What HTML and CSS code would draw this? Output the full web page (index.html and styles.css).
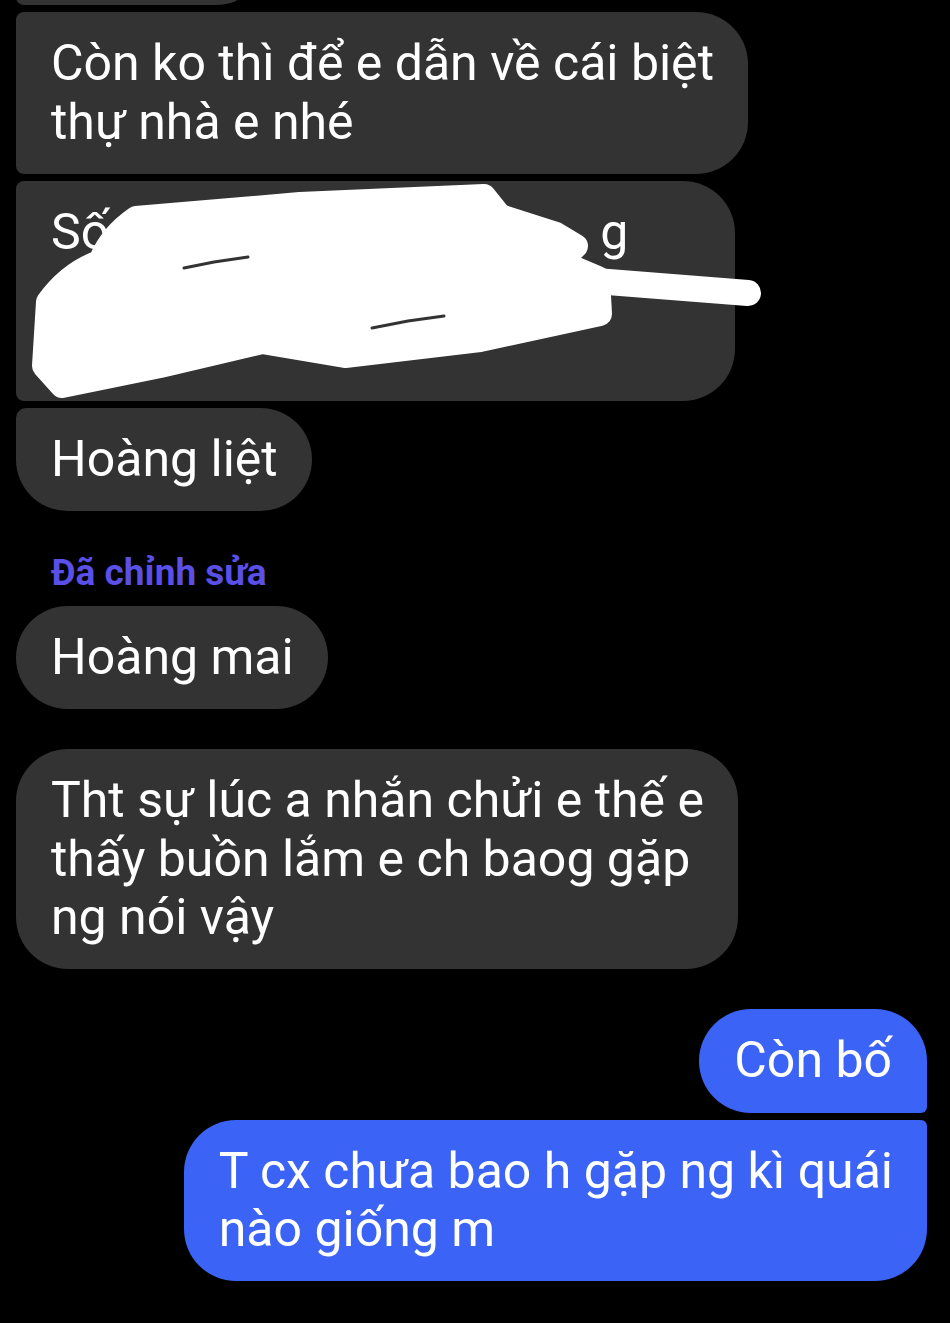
FILE: index.html
```html
<!DOCTYPE html>
<html lang="vi">
<head>
<meta charset="utf-8">
<title>Chat</title>
<link rel="stylesheet" href="styles.css">
</head>
<body>
<main class="chat">
  <div class="bubble in first-partial">&nbsp;</div>
  <div class="bubble in mid">Còn ko thì để e dẫn về cái biệt<br>thự nhà e nhé</div>
  <div class="bubble in mid redacted">
    <div class="line">Số<span class="blank"></span>g</div>
    <div class="line">&nbsp;</div>
    <div class="line">&nbsp;</div>
    <svg class="scribble" viewBox="16 181 760 230" width="760" height="230" aria-hidden="true">
      <g fill="#ffffff" stroke="#ffffff" stroke-linecap="round" stroke-linejoin="round">
        <path d="M48 302 Q70 272 100 262 Q110 236 136 218 L300 204 L484 196 L500 216 L556 234 L576 246 L560 262 L598 278 L600 314 L480 340 L345 356 L262 342 L160 366 L62 386 L44 366 Z" stroke-width="24"/>
      </g>
      <g fill="none" stroke-linecap="round" stroke-linejoin="round">
        <path d="M404 266 L748 293" stroke="#ffffff" stroke-width="26"/>
        <path d="M184 268 L214 262 L248 257" stroke="#333333" stroke-width="3"/>
        <path d="M372 328 L408 321 L444 316" stroke="#333333" stroke-width="3"/>
      </g>
    </svg>
  </div>
  <div class="bubble in last">Hoàng liệt</div>
  <div class="edited">Đã chỉnh sửa</div>
  <div class="bubble in single">Hoàng mai</div>
  <div class="bubble in single gap">Tht sự lúc a nhắn chửi e thế e<br>thấy buồn lắm e ch baog gặp<br>ng nói vậy</div>
  <div class="bubble out out-first gap">Còn bố</div>
  <div class="bubble out out-last">T cx chưa bao h gặp ng kì quái<br>nào giống m</div>
</main>
</body>
</html>
```
FILE: styles.css
```css
html, body {
  margin: 0;
  padding: 0;
  background: #000;
}

body {
  width: 950px;
  height: 1323px;
  overflow: hidden;
  font-family: Roboto, "Noto Sans", sans-serif;
  color: #fff;
}

.chat {
  display: flex;
  flex-direction: column;
  align-items: flex-start;
  gap: 7px;
  padding: 0 23px 0 16px;
}

.bubble {
  position: relative;
  font-size: 50px;
  line-height: 58.3px;
  padding: 22px 34px 23px 35px;
  white-space: nowrap;
  box-sizing: border-box;
}

.in {
  background: #333333;
}

.out {
  background: #3b63f6;
  align-self: flex-end;
}

.first-partial {
  width: 250px;
  margin-top: -98px;
  border-radius: 8px 50px 50px 8px;
}

.mid {
  border-radius: 8px 52px 52px 8px;
}

.last {
  border-radius: 10px 52px 52px 52px;
}

.single {
  border-radius: 52px;
}

.gap {
  margin-top: 33px;
}

.edited {
  font-size: 37px;
  line-height: 42px;
  font-weight: 700;
  color: #5a4fe6;
  padding-left: 35px;
  margin-top: 34px;
  margin-bottom: 5px;
}

.redacted {
  width: 719px;
}

.blank {
  display: inline-block;
  width: 491px;
}

.scribble {
  position: absolute;
  left: 0;
  top: 0;
  overflow: visible;
}

.out-first {
  border-radius: 52px 52px 6px 52px;
  padding-left: 35px;
  padding-right: 35px;
}

.out-last {
  border-radius: 52px 6px 52px 52px;
}
```
